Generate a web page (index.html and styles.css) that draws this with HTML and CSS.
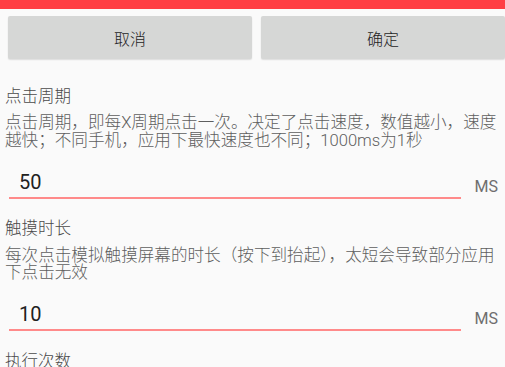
FILE: index.html
```html
<!DOCTYPE html>
<html lang="zh-CN">
<head>
<meta charset="utf-8">
<link rel="stylesheet" href="styles.css">
</head>
<body>
<div class="topbar"></div>
<div class="buttons">
  <div class="btn">取消</div>
  <div class="btn">确定</div>
</div>
<div class="content">
  <div class="section">
    <div class="label">点击周期</div>
    <div class="desc">点击周期，即每X周期点击一次。决定了点击速度，数值越小，速度越快；不同手机，应用下最快速度也不同；1000ms为1秒</div>
    <div class="row">
      <div class="input">50</div>
      <div class="unit">MS</div>
    </div>
  </div>
  <div class="section">
    <div class="label">触摸时长</div>
    <div class="desc">每次点击模拟触摸屏幕的时长（按下到抬起），太短会导致部分应用下点击无效</div>
    <div class="row">
      <div class="input">10</div>
      <div class="unit">MS</div>
    </div>
  </div>
  <div class="section">
    <div class="label">执行次数</div>
  </div>
</div>
</body>
</html>
```
FILE: styles.css
```css
html, body {
  margin: 0;
  padding: 0;
  background: #fafafa;
  overflow: hidden;
  font-family: Roboto, "Noto Sans CJK SC", sans-serif;
}
.topbar {
  height: 9px;
  background: #ff3e44;
}
.buttons {
  display: flex;
  gap: 9px;
  padding: 7px 0 0 8px;
}
.btn {
  flex: 1;
  height: 43px;
  background: #d6d7d6;
  border-radius: 2px;
  box-shadow: 0 1px 1.5px rgba(0,0,0,0.12);
  display: flex;
  align-items: center;
  justify-content: center;
  font-size: 16px;
  font-weight: 300;
  color: #1e1e1e;
}
.content {
  margin-top: 27.5px;
}
.section {
  padding: 0 4px 0 5px;
}
.label {
  font-size: 16.5px;
  font-weight: 300;
  line-height: 20px;
  color: #4a4a4a;
  margin-bottom: 7.75px;
}
.desc {
  font-size: 16.6px;
  font-weight: 300;
  line-height: 17.5px;
  color: #5e5e5e;
}
.row {
  display: flex;
  align-items: flex-end;
  margin-top: 20.25px;
  margin-bottom: 20.5px;
  padding-right: 3px;
}
.input {
  margin-left: 4px;
  width: 442px;
  padding-left: 10px;
  font-size: 20px;
  line-height: 24px;
  padding-bottom: 3px;
  border-bottom: 2px solid #ff8a8a;
  color: #212121;
}
.unit {
  margin-left: auto;
  font-size: 16px;
  line-height: 18px;
  color: #6e6e6e;
  padding-bottom: 3px;
}
```
